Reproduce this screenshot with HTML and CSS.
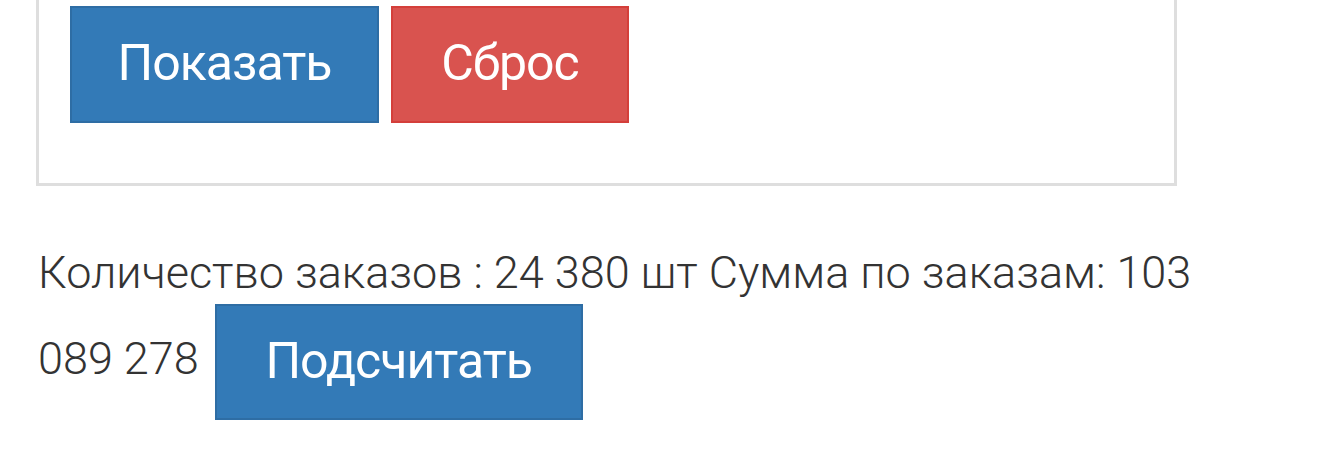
FILE: index.html
```html
<!DOCTYPE html>
<html lang="ru">
<head>
<meta charset="utf-8">
<title>Заказы</title>
<link rel="stylesheet" href="styles.css">
</head>
<body>
<div class="page">
  <div class="panel">
    <div class="actions">
      <button class="btn btn-primary btn-show">Показать</button>
      <button class="btn btn-danger btn-reset">Сброс</button>
    </div>
  </div>
  <p class="summary">Количество заказов : 24 380 шт Сумма по заказам: 103 089 278 <button class="btn btn-primary btn-count">Подсчитать</button></p>
</div>
</body>
</html>
```

FILE: styles.css
```css
html, body {
  margin: 0;
  padding: 0;
  background: #ffffff;
}

.page {
  padding: 0 0 0 36px;
  width: 1200px;
}

.panel {
  margin-top: -30px;
  width: 1104px;
  border: 3px solid #dedede;
  padding: 33px 0 60px 31px;
}

.actions {
  display: flex;
  gap: 12px;
}

.btn {
  font-family: Roboto, "Liberation Sans", sans-serif;
  font-size: 50px;
  letter-spacing: -1px;
  line-height: 1;
  color: #ffffff;
  border: 2px solid;
  border-radius: 0;
  cursor: pointer;
  vertical-align: middle;
  margin: 0;
  padding: 0 0 3px 0;
}

.btn-primary {
  background: #337ab7;
  border-color: #2e6da4;
}

.btn-danger {
  background: #d9534f;
  border-color: #d43f3a;
}

.btn-show {
  width: 309px;
  height: 117px;
}

.btn-reset {
  width: 238px;
  height: 117px;
}

.btn-count {
  width: 368px;
  height: 116px;
  margin-left: 5px;
}

.summary {
  margin: 56px 0 0 2px;
  font-family: Roboto, "Liberation Sans", sans-serif;
  font-weight: 300;
  font-size: 45px;
  line-height: 62px;
  color: #333333;
  width: 1180px;
}
```
